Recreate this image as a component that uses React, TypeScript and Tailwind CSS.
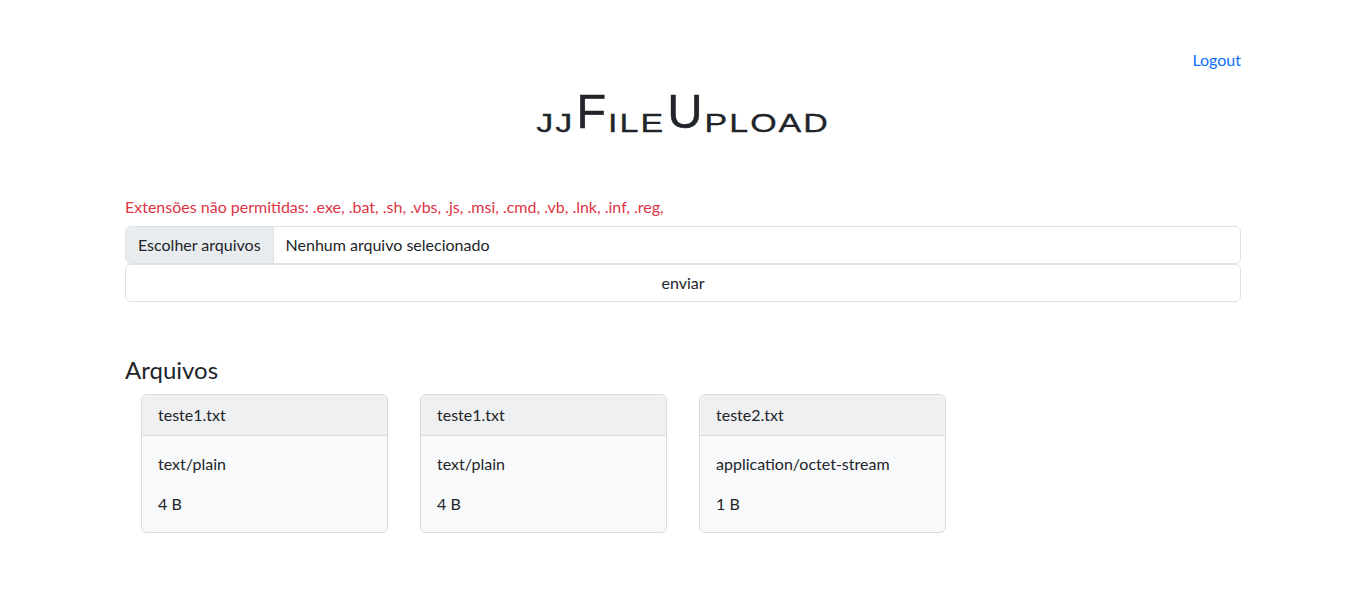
function Small({ children }: { children: string }) {
  return (
    <span className="inline-block text-[34px] tracking-[2px] uppercase scale-y-[0.78] origin-bottom">
      {children}
    </span>
  );
}

export default function App() {
  const files = [
    { name: "teste1.txt", type: "text/plain", size: "4 B" },
    { name: "teste1.txt", type: "text/plain", size: "4 B" },
    { name: "teste2.txt", type: "application/octet-stream", size: "1 B" },
  ];

  return (
    <div className="min-h-[601px] bg-white text-[#212529] font-['Segoe_UI','Lato',sans-serif]">
      <div className="mx-auto w-[1116px]">
        <div className="flex justify-end pt-[48px]">
          <a href="#" className="text-[16px] leading-[24px] text-[#0d6efd]">
            Logout
          </a>
        </div>

        <h1 className="mt-[10px] flex items-baseline justify-center h-[58px] leading-[58px] text-[49px] font-['Liberation_Sans',Arial,sans-serif] [-webkit-text-stroke:0.4px_#212529]">
          <Small>jj</Small>
          <span className="mx-[2px]">F</span>
          <Small>ile</Small>
          <span className="mx-[2px]">U</span>
          <Small>pload</Small>
        </h1>

        <form className="mt-[55px]">
          <p className="text-[16px] leading-[24px] text-[#dc3545] mb-[7px]">
            Extensões não permitidas: .exe, .bat, .sh, .vbs, .js, .msi, .cmd, .vb, .lnk, .inf, .reg,
          </p>
          <div className="flex h-[38px] rounded-[6px] border border-[#dee2e6] overflow-hidden text-[16px]">
            <span className="flex items-center px-[12px] bg-[#e9ecef] border-r border-[#dee2e6]">
              Escolher arquivos
            </span>
            <span className="flex items-center px-[12px]">Nenhum arquivo selecionado</span>
          </div>
          <button
            type="button"
            className="w-full h-[38px] rounded-[6px] border border-[#dee2e6] bg-white text-[16px]"
          >
            enviar
          </button>
        </form>

        <h4 className="mt-[53px] text-[24px] leading-[29px]">Arquivos</h4>

        <div className="grid grid-cols-4 mt-[10px]">
          {files.map((f, i) => (
            <div
              key={i}
              className="mx-[16px] rounded-[6px] border border-[#dadbdc] bg-[#f8f9fa] text-[16px] leading-[24px] overflow-hidden"
            >
              <div className="px-[16px] py-[8px] bg-[#eff0f1] border-b border-[#dadbdc]">{f.name}</div>
              <div className="p-[16px]">
                <p className="mb-[16px]">{f.type}</p>
                <p>{f.size}</p>
              </div>
            </div>
          ))}
        </div>
      </div>
    </div>
  );
}
